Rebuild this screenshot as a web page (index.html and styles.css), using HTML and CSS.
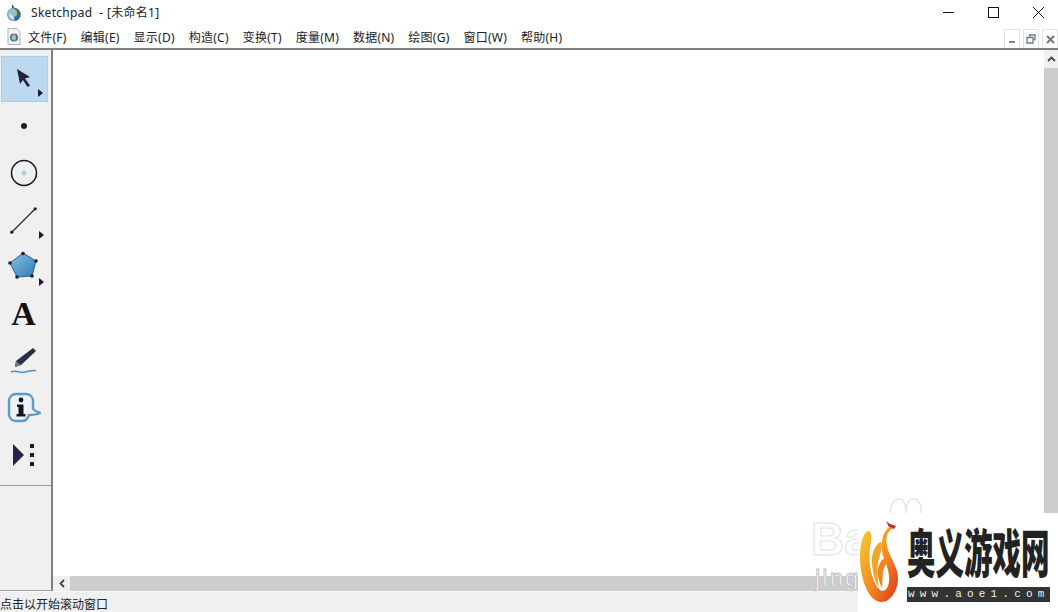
FILE: index.html
```html
<!DOCTYPE html>
<html lang="en">

<head>
  <meta charset="UTF-8">
  <meta name="viewport" content="width=device-width, initial-scale=1.0">
  <title>Sketchpad</title>
  <link rel="stylesheet" href="styles.css">
</head>

<body>
  <div class="app">
    <div class="titlebar">
      <svg class="app-logo" width="16" height="18" viewBox="0 0 16 18">
        <circle cx="8" cy="10.500" r="6.800" fill="#2f6f9f" />
        <path d="M7 4c3 1.500 4 5 2 8-1 1.500-1 3 0 5-4 0-7-2.500-7.500-6.500C1.500 8 3.500 5 7 4z" fill="#8fc0dc" />
        <path d="M8.500 5c2.500 1 3.500 5 1.500 7.500L8 11c1-2 1.500-4 .5-6z" fill="#e6b431" />
        <path d="M4 9c1 2 3 3 4 6-2 0-5-2-4-6z" fill="#f1f5f8" />
        <path d="M6 0.500l2.500 3-2.500 .5z" fill="#444" />
      </svg>
      <span class="title-text">Sketchpad&nbsp; - [未命名1]</span>
      <div class="window-btns">
        <svg width="45" height="25" viewBox="0 0 45 25"><path d="M18 12.500h11" stroke="#111" /></svg>
        <svg width="45" height="25" viewBox="0 0 45 25"><rect x="18.500" y="7.500" width="10" height="10" fill="none" stroke="#111" /></svg>
        <svg width="43" height="25" viewBox="0 0 43 25"><path d="M18 7l11 11M29 7L18 18" stroke="#111" /></svg>
      </div>
    </div>

    <div class="menubar">
      <svg class="doc-icon" width="14" height="17" viewBox="0 0 14 17">
        <path d="M1 .5h9l3 3v13H1z" fill="#f4f4f4" stroke="#b0b0b0" />
        <circle cx="7" cy="9.500" r="4" fill="#2f6f9f" />
        <path d="M7 6c2 1 2 4 1 7L4.500 11C4 9 5 7 7 6z" fill="#8fc0dc" />
        <path d="M7.500 6.500c1.500 1 2 3 1 5L7 10.500z" fill="#e6b431" />
      </svg>
      <nav class="menu">
        <span>文件(F)</span>
        <span>编辑(E)</span>
        <span>显示(D)</span>
        <span>构造(C)</span>
        <span>变换(T)</span>
        <span>度量(M)</span>
        <span>数据(N)</span>
        <span>绘图(G)</span>
        <span>窗口(W)</span>
        <span>帮助(H)</span>
      </nav>
      <div class="mdi-btns">
        <div class="mdi-btn"><svg width="9" height="9" viewBox="0 0 9 9"><path d="M1 7h6" stroke="#7d8790" stroke-width="2" /></svg></div>
        <div class="mdi-btn"><svg width="10" height="10" viewBox="0 0 10 10"><path d="M3.500 2.500V1h5.500v4.500H7M1 3.500h6v5.500H1z" fill="none" stroke="#6f7a84" stroke-width="1.300" /></svg></div>
        <div class="mdi-btn"><svg width="9" height="9" viewBox="0 0 9 9"><path d="M1 1l7 7M8 1L1 8" stroke="#6f7a84" stroke-width="2" /></svg></div>
      </div>
    </div>

    <div class="main">
      <aside class="toolbar">
        <div class="tool selected">
          <svg width="20" height="22" viewBox="0 0 20 22"><path d="M3 1l13 8-5 1.500 5 7-2.500 1.500-4.500-7L6 16z" fill="#23233c" /></svg>
          <i class="more"></i>
        </div>
        <div class="tool">
          <svg width="8" height="8" viewBox="0 0 8 8"><circle cx="4" cy="4" r="3" fill="#1c1c30" /></svg>
        </div>
        <div class="tool">
          <svg width="28" height="28" viewBox="0 0 28 28">
            <circle cx="14" cy="14" r="12.500" fill="none" stroke="#15151f" stroke-width="1.500" />
            <path d="M14 11v6M11 14h6" stroke="#7fb3d0" />
          </svg>
        </div>
        <div class="tool">
          <svg width="30" height="30" viewBox="0 0 30 30">
            <path d="M3 27L26 4" stroke="#2b2b38" stroke-width="1.300" />
            <circle cx="2.800" cy="27.200" r="1.600" fill="#1c1c30" />
            <circle cx="26.200" cy="3.800" r="1.600" fill="#1c1c30" />
          </svg>
          <i class="more"></i>
        </div>
        <div class="tool">
          <svg class="poly-icon" width="32" height="32" viewBox="0 0 32 32">
            <defs>
              <linearGradient id="poly" x1="0" y1="0" x2="1" y2="1">
                <stop offset="0" stop-color="#8cc0e2" />
                <stop offset="1" stop-color="#2c7cb8" />
              </linearGradient>
            </defs>
            <path d="M16 2l13 8-4 15-15 1L3 12z" fill="url(#poly)" stroke="#2f5f88" />
            <g fill="#1c1c30">
              <circle cx="16" cy="2.500" r="1.800" />
              <circle cx="29" cy="10" r="1.800" />
              <circle cx="25" cy="25" r="1.800" />
              <circle cx="10" cy="26" r="1.800" />
              <circle cx="3" cy="12" r="1.800" />
            </g>
          </svg>
          <i class="more"></i>
        </div>
        <div class="tool">
          <span class="text-tool">A</span>
        </div>
        <div class="tool">
          <svg width="28" height="28" viewBox="0 0 28 28">
            <path d="M23 1l3 3L11 18l-6 2 1-6z" fill="#2a2a4c" />
            <path d="M6 14l5 4-6 2z" fill="#777" />
            <path d="M1 25c6-3 8 2 14 0 3-1 6-2 11-1.500" fill="none" stroke="#4a94c8" stroke-width="1.500" />
          </svg>
        </div>
        <div class="tool">
          <svg class="info-icon" width="34" height="32" viewBox="0 0 34 32">
            <path d="M9 2h10c4 0 7 3 7 7v8c2 2 4 3 7 4-4 2-8 2-11 2-1 3-3 6-7 6H9c-4 0-7-3-7-7V9c0-4 3-7 7-7z" fill="#eef3f7" stroke="#5c9cc8" stroke-width="2.400" />
            <circle cx="14" cy="8" r="2.400" fill="#15151f" />
            <path d="M10 12.500h6.500V22h2v2.500H9.500V22h2v-7H10z" fill="#15151f" />
          </svg>
        </div>
        <div class="tool">
          <svg width="26" height="24" viewBox="0 0 26 24">
            <path d="M2 1l11 11L2 23z" fill="#25254a" />
            <rect x="19" y="1" width="4" height="4" fill="#1c1c30" />
            <rect x="19" y="10" width="4" height="4" fill="#1c1c30" />
            <rect x="19" y="19" width="4" height="4" fill="#1c1c30" />
          </svg>
        </div>
        <hr class="tool-sep">
      </aside>

      <div class="document">
        <div class="doc-row">
          <div class="canvas"></div>
          <div class="vscroll">
            <div class="arrow-btn v"><svg width="9" height="6" viewBox="0 0 9 6"><path d="M1 5l3.500-3.500L8 5" fill="none" stroke="#444" stroke-width="1.800" /></svg></div>
            <div class="thumb"></div>
          </div>
        </div>
        <div class="hscroll">
          <div class="arrow-btn h"><svg width="6" height="9" viewBox="0 0 6 9"><path d="M5 1L1.500 4.500 5 8" fill="none" stroke="#444" stroke-width="1.800" /></svg></div>
          <div class="thumb"></div>
        </div>
      </div>
    </div>

    <div class="statusbar">点击以开始滚动窗口</div>
  </div>

  <!-- watermarks over the corner -->
  <div class="ghost-mark">
    <svg class="ghost-paw" width="34" height="18" viewBox="0 0 34 18"><path d="M2 17C0 6 6 1 10 1c5 0 7 7 7 16M17 17C16 6 20 1 25 1c5 0 8 6 7 16" fill="none" stroke="#e4e4e4" stroke-width="1.500" /></svg>
    <span class="ghost-ba">Ba</span>
    <span class="ghost-jing">jing</span>
  </div>
  <div class="site-mark">
    <svg class="flame" width="42" height="86" viewBox="0 0 42 86">
      <defs>
        <linearGradient id="flame" x1="0" y1="0" x2="1" y2="1">
          <stop offset="0" stop-color="#f5d030" />
          <stop offset=".55" stop-color="#f08a22" />
          <stop offset="1" stop-color="#e02f1a" />
        </linearGradient>
      </defs>
      <path d="M28 3l4 3 6 2-2 3-5-2z" fill="#c8272d" />
      <path d="M35 10C28 14 27 22 30 32C34 43 40 50 40 60C40 73 32 84 24 84C10 84 2 60 2 38C2 26 5 15 10 13C14 13 14 20 12 30C10 44 13 60 20 70C24 75 28 73 30 68C33 60 30 50 26 41C22 30 23 15 31 9z" fill="url(#flame)" />
      <path d="M23 24C17 26 13 36 14 46C15 56 17 64 21 69C19 60 19 48 21 40C23 34 25 28 23 24z" fill="#f4a528" />
      <path d="M28 40C22 41 19 50 20 58C21 63 22 66 24 70C25 62 24 55 26 50C28 46 29 43 28 40z" fill="#ee8522" />
    </svg>
    <div class="site-text">
      <div class="site-name">奥义游戏网</div>
      <div class="site-url">www.aoe1.com</div>
    </div>
  </div>
</body>

</html>
```

FILE: styles.css
```css
html,
body {
  margin: 0;
  padding: 0;
  height: 100%;
  overflow: hidden;
}

body {
  font-family: "Noto Sans", "Noto Sans CJK SC", sans-serif;
  font-size: 12px;
  color: #222;
  background-color: #fff;
  position: relative;
}

.app {
  display: flex;
  flex-direction: column;
  height: 612px;
}

.titlebar {
  display: flex;
  align-items: center;
  height: 25px;
  padding-left: 6px;
  background-color: #fff;
}

.app-logo {
  margin-right: 9px;
}

.title-text {
  font-size: 12px;
  line-height: 25px;
  letter-spacing: .3px;
}

.window-btns {
  display: flex;
  margin-left: auto;
}

.menubar {
  display: flex;
  align-items: center;
  height: 23px;
  padding-left: 7px;
  background-color: #fff;
}

.doc-icon {
  margin-right: 7px;
}

.menu {
  display: flex;
  gap: 13.900px;
  padding-top: 2px;
}

.menu span {
  line-height: 23px;
  letter-spacing: .25px;
  white-space: nowrap;
}

.mdi-btns {
  display: flex;
  gap: 3px;
  margin-left: auto;
  align-self: flex-end;
}

.mdi-btn {
  display: flex;
  align-items: center;
  justify-content: center;
  width: 16px;
  height: 19px;
  border: 1px solid #e2e2e2;
  border-bottom: none;
  box-sizing: border-box;
}

.main {
  display: flex;
  flex: 1;
  min-height: 0;
  border-top: 2px solid #7f7f7f;
}

.toolbar {
  display: flex;
  flex-direction: column;
  width: 51px;
  padding-top: 5px;
  background-color: #f0f0f0;
  border-right: 2px solid #7f7f7f;
  border-bottom: 1px solid #a0a0a0;
}

.tool {
  display: flex;
  align-items: center;
  justify-content: center;
  position: relative;
  width: 47px;
  height: 47px;
  padding-right: 2px;
  margin-left: 1px;
  flex: none;
  box-sizing: border-box;
}

.tool.selected {
  height: 46px;
  margin-top: 1px;
  padding-right: 1px;
  background-color: #bdd9f0;
  border: 1px solid #aecde6;
}

.more {
  position: absolute;
  right: 4px;
  bottom: 4px;
  width: 0;
  height: 0;
  border-left: 5px solid #1c1c30;
  border-top: 4px solid transparent;
  border-bottom: 4px solid transparent;
}

.poly-icon {
  margin-right: 2px;
}

.info-icon {
  margin-right: -1px;
}

.text-tool {
  font-family: "Liberation Serif", serif;
  font-size: 34px;
  font-weight: bold;
  line-height: 1;
  color: #111;
}

.tool-sep {
  width: 100%;
  height: 1px;
  margin: 7px 0 0;
  border: none;
  background-color: #a0a0a0;
}

.document {
  display: flex;
  flex-direction: column;
  flex: 1;
  min-width: 0;
}

.doc-row {
  display: flex;
  flex: 1;
  min-height: 0;
}

.canvas {
  flex: 1;
  background-color: #fff;
}

.vscroll {
  display: flex;
  flex-direction: column;
  width: 14px;
  background-color: #f0f0f0;
}

.vscroll .thumb {
  flex: 1;
  background-color: #cdcdcd;
}

.arrow-btn {
  display: flex;
  align-items: center;
  justify-content: center;
  background-color: #f0f0f0;
  flex: none;
}

.arrow-btn.v {
  height: 18px;
}

.arrow-btn.h {
  width: 17px;
}

.hscroll {
  display: flex;
  height: 15px;
  background-color: #f0f0f0;
}

.hscroll .thumb {
  flex: 1;
  background-color: #cdcdcd;
}

.statusbar {
  height: 21px;
  line-height: 25px;
  background-color: #f0f0f0;
  border-top: 1px solid #fafafa;
  box-sizing: border-box;
  white-space: nowrap;
}

.ghost-mark {
  position: absolute;
  left: 800px;
  top: 490px;
  width: 60px;
  height: 100px;
}

.ghost-paw {
  position: absolute;
  left: 89px;
  top: 8px;
}

.ghost-ba {
  position: absolute;
  left: 11px;
  top: 26px;
  font-family: "Liberation Sans", sans-serif;
  font-size: 46px;
  font-weight: bold;
  line-height: 1;
  color: #fff;
  -webkit-text-stroke: 1px #e2e2e2;
}

.ghost-jing {
  position: absolute;
  left: 15px;
  top: 76px;
  font-family: "Liberation Sans", sans-serif;
  font-size: 24px;
  letter-spacing: 2px;
  line-height: 1;
  color: #fff;
  -webkit-text-stroke: 1px #c4c4c4;
}

.site-mark {
  position: absolute;
  left: 858px;
  top: 513px;
  width: 200px;
  height: 99px;
  background-color: #fff;
}

.flame {
  position: absolute;
  left: 0;
  top: 5px;
}

.site-text {
  position: absolute;
  left: 49px;
  top: 12px;
  width: 143px;
}

.site-name {
  font-family: "Noto Sans CJK SC", sans-serif;
  font-size: 28.500px;
  font-weight: 900;
  line-height: 52px;
  height: 52px;
  color: #222;
  white-space: nowrap;
  transform: scaleY(1.85);
}

.site-url {
  margin-top: 10px;
  height: 15px;
  line-height: 15px;
  font-family: "Liberation Mono", monospace;
  font-size: 11px;
  letter-spacing: 5.200px;
  padding-left: 1px;
  color: #eee;
  background-color: #333;
  white-space: nowrap;
  overflow: hidden;
}
```
